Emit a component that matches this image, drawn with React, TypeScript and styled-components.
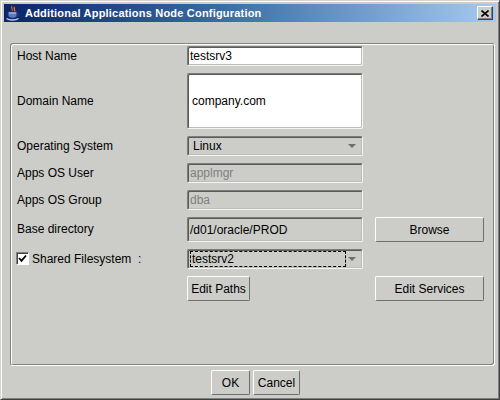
import styled, { createGlobalStyle } from 'styled-components';

const GlobalStyle = createGlobalStyle`
  html, body {
    margin: 0;
    padding: 0;
    background: #cccdc9;
  }
  body {
    font-family: "Liberation Sans", Arial, sans-serif;
    font-size: 12px;
    color: #000;
  }
  * {
    box-sizing: border-box;
  }
`;

const Window = styled.div`
  width: 500px;
  height: 400px;
  background: #cccdc9;
  border: 1px solid;
  border-color: #d4d4d0 #404040 #404040 #d4d4d0;
  box-shadow: inset 1px 1px #ffffff, inset -1px -1px #808080;
  padding: 3px;
  display: flex;
  flex-direction: column;
`;

const TitleBar = styled.div`
  height: 18px;
  flex: none;
  display: flex;
  align-items: center;
  gap: 4px;
  padding: 0 3px 0 1px;
  background: linear-gradient(to right, #0a246a 0%, #3a6ea5 45%, #a6caf0 100%);
`;

const TitleText = styled.div`
  flex: 1;
  color: #ffffff;
  font-weight: 700;
  font-size: 11px;
  letter-spacing: 0.2px;
  white-space: nowrap;
`;

const CloseButton = styled.div`
  width: 16px;
  height: 14px;
  background: #cccdc9;
  border: 1px solid;
  border-color: #ffffff #404040 #404040 #ffffff;
  box-shadow: inset -1px -1px #808080;
  display: flex;
  align-items: center;
  justify-content: center;
`;

const Body = styled.div`
  flex: 1;
  display: flex;
  flex-direction: column;
  padding: 21px 1px 0 6px;
`;

const Panel = styled.div`
  height: 323px;
  border: 1px solid;
  border-color: #808080 #ffffff #ffffff #808080;
  box-shadow: inset 1px 1px #ffffff, inset -1px -1px #808080;
  border-radius: 3px;
  padding: 2px 0 0 6px;
  display: flex;
  flex-direction: column;
  gap: 7px;
`;

const Row = styled.div<{ $h?: number }>`
  height: ${(p) => p.$h ?? 20}px;
  display: grid;
  grid-template-columns: 158px 176px 109px;
  column-gap: 12px;
`;

const Label = styled.div`
  grid-column: 1;
  align-self: center;
  display: flex;
  align-items: center;
  gap: 3px;
  white-space: pre;
  margin-top: -1px;
`;

const Field = styled.div<{ $white?: boolean; $disabled?: boolean; $area?: boolean }>`
  grid-column: 2;
  position: relative;
  display: flex;
  align-items: center;
  padding: ${(p) => (p.$area ? '0 4px' : '0 2px')};
  background: ${(p) => (p.$white ? '#ffffff' : '#cccdc9')};
  color: ${(p) => (p.$disabled ? '#808080' : '#000000')};
  border: 1px solid;
  border-color: #7c7c7c #f4f4f4 #f4f4f4 #7c7c7c;
  box-shadow: inset 1px 1px #5a5a5a, inset -1px -1px #bdbdbb;
  border-radius: 2px;
  white-space: nowrap;
  overflow: hidden;
`;

const ComboText = styled.span<{ $focused?: boolean }>`
  flex: 1;
  display: flex;
  align-items: center;
  margin-right: 14px;
  height: 16px;
  padding-left: ${(p) => (p.$focused ? '1px' : '2px')};
  border: 1px dashed ${(p) => (p.$focused ? '#000' : 'transparent')};
`;

const Arrow = styled.span`
  position: absolute;
  right: 6px;
  top: 50%;
  margin-top: -2px;
  width: 0;
  height: 0;
  border-left: 4px solid transparent;
  border-right: 4px solid transparent;
  border-top: 4px solid #6e6e6e;
`;

const Button = styled.button<{ $col?: number; $w?: number }>`
  grid-column: ${(p) => p.$col ?? 3};
  justify-self: start;
  width: ${(p) => (p.$w ? `${p.$w}px` : '100%')};
  height: 25px;
  font-family: "Liberation Sans", Arial, sans-serif;
  font-size: 12px;
  color: #000;
  background: #cccdc9;
  border: 1px solid;
  border-color: #ffffff #6e6e6e #6e6e6e #ffffff;
  border-radius: 2px;
  padding: 0 4px;
  margin: 0;
  display: flex;
  align-items: center;
  justify-content: center;
  white-space: nowrap;
`;

const Check = styled.span`
  width: 13px;
  height: 13px;
  background: #ffffff;
  border: 1px solid;
  border-color: #808080 #ffffff #ffffff #808080;
  box-shadow: inset 1px 1px #404040;
  display: flex;
  align-items: center;
  justify-content: center;
  margin-left: -1px;
`;

const Footer = styled.div`
  flex: 1;
  display: flex;
  justify-content: center;
  align-items: flex-start;
  gap: 3px;
  padding: 4px 0 0 6px;
`;

const JavaIcon = () => (
  <svg width="16" height="16" viewBox="0 0 16 16">
    <path d="M7 1 C5 3 9 4 7 6" stroke="#e0401c" strokeWidth="1.4" fill="none" />
    <path d="M9.5 2 C8 3.5 11 4.5 9.2 6.2" stroke="#f07a30" strokeWidth="1.2" fill="none" />
    <path d="M3 7 H12 V9 C12 12 10 13 7.5 13 C5 13 3 12 3 9 Z" fill="#5a7ab8" stroke="#2a3f7a" strokeWidth="0.8" />
    <path d="M4 8 H11" stroke="#c8d4ee" strokeWidth="1" />
    <path d="M12 8 C14.5 8 14.5 11 11.5 11" stroke="#2a3f7a" strokeWidth="1" fill="none" />
    <path d="M1.5 13.5 C4 15.5 11 15.5 13.5 13.5" stroke="#c0c8e0" strokeWidth="1.4" fill="none" />
  </svg>
);

const CloseGlyph = () => (
  <svg width="8" height="7" viewBox="0 0 8 7">
    <path d="M0.5 0.5 L7.5 6.5 M7.5 0.5 L0.5 6.5" stroke="#000" strokeWidth="1.6" />
  </svg>
);

const CheckMark = () => (
  <svg width="9" height="9" viewBox="0 0 9 9">
    <path d="M1 4 L3.5 6.8 L8 1.5" stroke="#000" strokeWidth="1.8" fill="none" />
  </svg>
);

const App = (): JSX.Element => {
  return (
    <>
      <GlobalStyle />
      <Window>
        <TitleBar>
          <JavaIcon />
          <TitleText>Additional Applications Node Configuration</TitleText>
          <CloseButton>
            <CloseGlyph />
          </CloseButton>
        </TitleBar>
        <Body>
          <Panel>
            <Row>
              <Label>Host Name</Label>
              <Field $white>testsrv3</Field>
            </Row>
            <Row $h={56}>
              <Label>Domain Name</Label>
              <Field $white $area>company.com</Field>
            </Row>
            <Row>
              <Label>Operating System</Label>
              <Field>
                <ComboText>Linux</ComboText>
                <Arrow />
              </Field>
            </Row>
            <Row>
              <Label>Apps OS User</Label>
              <Field $disabled>applmgr</Field>
            </Row>
            <Row>
              <Label>Apps OS Group</Label>
              <Field $disabled>dba</Field>
            </Row>
            <Row $h={25}>
              <Label>Base directory</Label>
              <Field>/d01/oracle/PROD</Field>
              <Button>Browse</Button>
            </Row>
            <Row>
              <Label>
                <Check>
                  <CheckMark />
                </Check>
                {'Shared Filesystem  :'}
              </Label>
              <Field>
                <ComboText $focused>testsrv2</ComboText>
                <Arrow />
              </Field>
            </Row>
            <Row $h={25}>
              <Button $col={2} $w={63}>Edit Paths</Button>
              <Button>Edit Services</Button>
            </Row>
          </Panel>
          <Footer>
            <Button $w={39}>OK</Button>
            <Button $w={47}>Cancel</Button>
          </Footer>
        </Body>
      </Window>
    </>
  );
};

export default App;
